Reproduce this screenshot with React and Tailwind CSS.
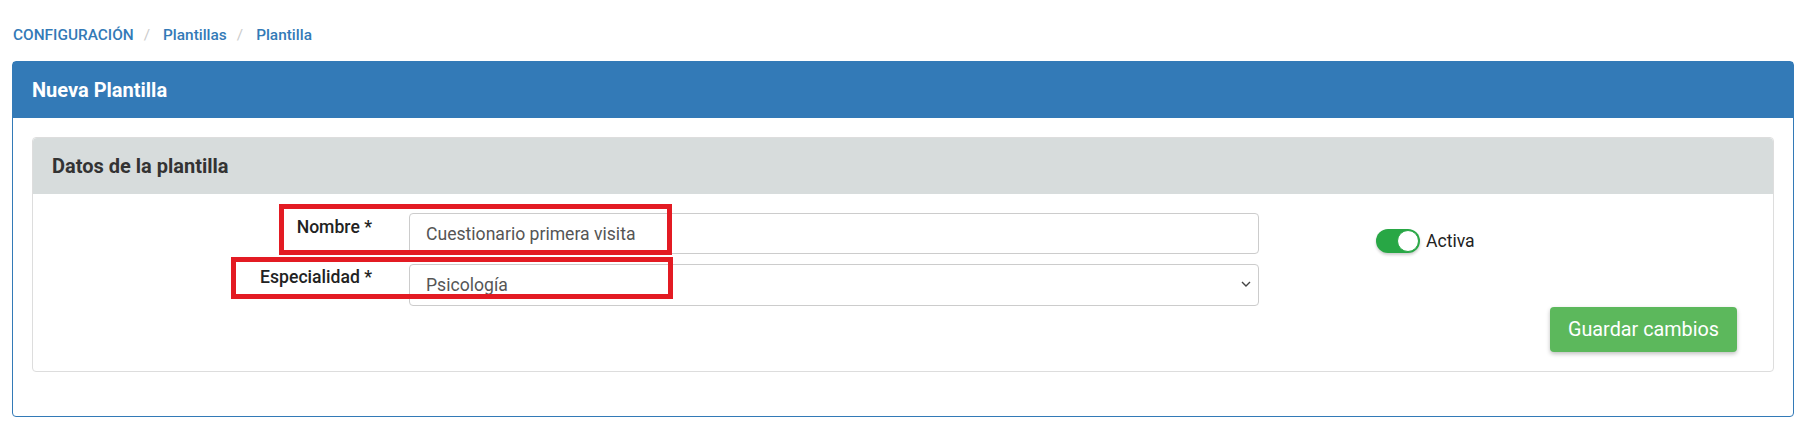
import { useState } from "react"

export default function App() {
    const [nombre, setNombre] = useState("Cuestionario primera visita")
    const [especialidad, setEspecialidad] = useState("Psicología")
    const [activa, setActiva] = useState(true)

    return (
        <div className="relative min-h-[445px] bg-white px-[12px] pt-[25px] font-['Roboto',sans-serif]">
            {/* breadcrumb */}
            <div className="flex items-center pl-[1px] text-[15.4px] font-medium leading-[20px] text-[#337ab7]">
                <span>CONFIGURACIÓN</span>
                <span className="pl-[10px] pr-[13px] font-normal text-[#ccc]">/</span>
                <span>Plantillas</span>
                <span className="pl-[10px] pr-[13px] font-normal text-[#ccc]">/</span>
                <span>Plantilla</span>
            </div>

            {/* panel */}
            <div className="mt-[16px] rounded-[4px] border border-[#337ab7]">
                <div className="flex h-[56px] items-center bg-[#337ab7] pl-[19px] text-[20px] font-bold text-white">
                    Nueva Plantilla
                </div>

                <div className="px-[19px] pt-[19px] pb-[44px]">
                    <div className="rounded-[4px] border border-[#ddd]">
                        <div className="flex h-[56px] items-center rounded-t-[4px] bg-[#d7dcdc] pl-[19px] text-[20px] font-bold text-[#333]">
                            Datos de la plantilla
                        </div>

                        <div className="pt-[19px] pb-[19px]">
                            <div className="flex items-start">
                                <div className="flex w-[1226px] flex-col gap-[10px]">
                                    <div className="flex">
                                        <label className="w-[376px] pt-[2px] pr-[37px] text-right text-[17.6px] font-medium leading-[24px] text-[#222]">
                                            Nombre *
                                        </label>
                                        <input
                                            value={nombre}
                                            onChange={(e) => setNombre(e.target.value)}
                                            className="h-[41px] w-[850px] rounded-[4px] border border-[#ccc] pl-[16px] text-[17.6px] text-[#555] outline-none"
                                        />
                                    </div>
                                    <div className="flex">
                                        <label className="w-[376px] pt-[1px] pr-[37px] text-right text-[17.6px] font-medium leading-[24px] text-[#222]">
                                            Especialidad *
                                        </label>
                                        <div className="relative">
                                            <select
                                                value={especialidad}
                                                onChange={(e) => setEspecialidad(e.target.value)}
                                                className="h-[42px] w-[850px] appearance-none rounded-[4px] border border-[#ccc] bg-white pl-[16px] text-[17.6px] text-[#555] outline-none"
                                            >
                                                <option>Psicología</option>
                                                <option>Psiquiatría</option>
                                                <option>Nutrición</option>
                                            </select>
                                            <svg className="pointer-events-none absolute top-[17px] right-[8px]" width="10" height="7" viewBox="0 0 10 7">
                                                <polyline points="1,1 5,5 9,1" fill="none" stroke="#444" strokeWidth="1.4" />
                                            </svg>
                                        </div>
                                    </div>
                                </div>

                                <div className="ml-[117px] mt-[16px] flex items-center gap-[6px]">
                                    <button
                                        onClick={() => setActiva(!activa)}
                                        className={`flex h-[24px] w-[44px] items-center rounded-full p-[1px] shadow-[0_2px_3px_rgba(0,0,0,0.2)] ${activa ? "justify-end bg-[#28a745]" : "justify-start bg-[#ccc]"}`}
                                    >
                                        <span className="h-[22px] w-[22px] rounded-full border-[1.5px] border-[#28a745] bg-white" />
                                    </button>
                                    <span className="text-[17.6px] leading-[24px] text-[#222]">Activa</span>
                                </div>
                            </div>

                            <div className="flex justify-end pr-[36px]">
                                <button className="mt-[1px] h-[45px] w-[187px] rounded-[4px] bg-[#5cb85c] text-[19.8px] text-white shadow-[0_2px_4px_rgba(0,0,0,0.25)] hover:bg-[#4cae4c]">
                                    Guardar cambios
                                </button>
                            </div>
                        </div>
                    </div>
                </div>
            </div>

            {/* annotation boxes */}
            <div className="pointer-events-none absolute top-[204px] left-[279px] h-[51px] w-[393px] border-[5px] border-[#e31b23]" />
            <div className="pointer-events-none absolute top-[257px] left-[231px] h-[42px] w-[442px] border-[5px] border-[#e31b23]" />
        </div>
    )
}
